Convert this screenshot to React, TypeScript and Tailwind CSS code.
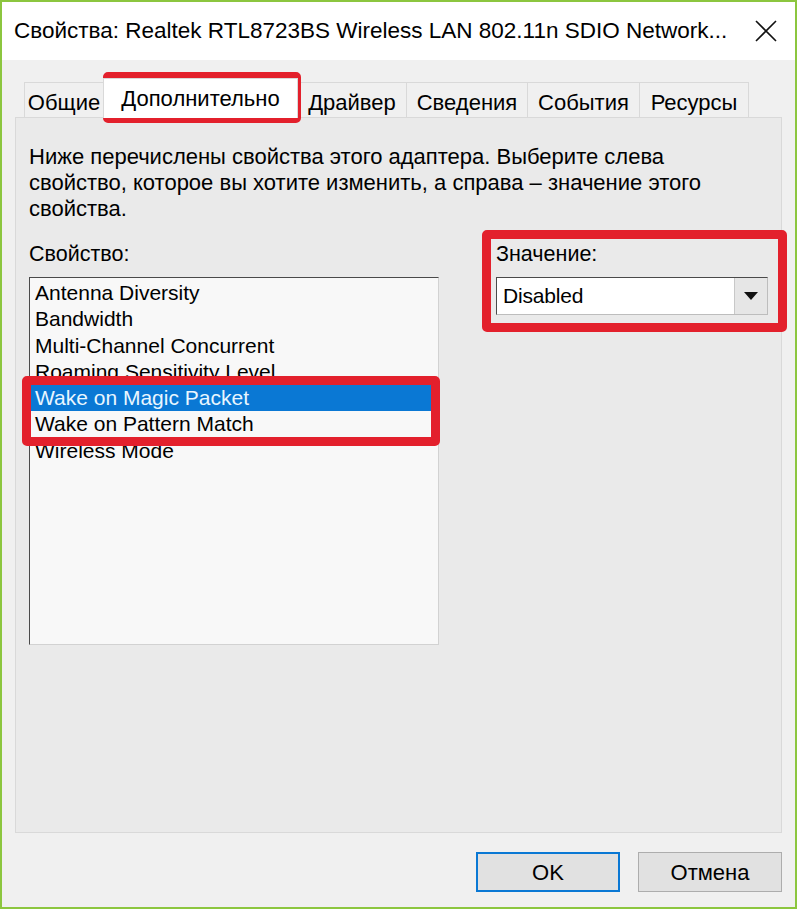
import React from 'react'

const tabs = [
  { label: 'Общие', w: 'w-[80px]' },
  { label: 'Дополнительно', w: 'w-[195px]' },
  { label: 'Драйвер', w: 'w-[110px]' },
  { label: 'Сведения', w: 'w-[122px]' },
  { label: 'События', w: 'w-[113px]' },
  { label: 'Ресурсы', w: 'w-[110px]' },
]

const props = [
  'Antenna Diversity',
  'Bandwidth',
  'Multi-Channel Concurrent',
  'Roaming Sensitivity Level',
  'Wake on Magic Packet',
  'Wake on Pattern Match',
  'Wireless Mode',
]

export default function App() {
  return (
    <div
      className="relative w-[800px] h-[910px] bg-white overflow-hidden text-black"
      style={{ fontFamily: '"Liberation Sans", Arial, sans-serif' }}
    >
      <div className="flex flex-col w-[797px] h-[909px] border-2 border-[#8cc63f] bg-[#f0f0f0]">
        {/* title bar */}
        <div className="flex items-center justify-between h-[58px] bg-white pl-[12px] pr-[16px]">
          <span className="text-[22.5px] whitespace-nowrap">
            Свойства: Realtek RTL8723BS Wireless LAN 802.11n SDIO Network...
          </span>
          <svg width="22" height="22" viewBox="0 0 22 22" className="mr-[2px]">
            <path d="M1 1 L21 21 M21 1 L1 21" stroke="#111" strokeWidth="1.6" fill="none" />
          </svg>
        </div>

        {/* body */}
        <div className="flex flex-col flex-1 pt-[22px] px-[13px]">
          <div className="flex items-end h-[35px] pl-[10px]">
            {tabs.map((t, i) =>
              i === 1 ? (
                <div
                  key={t.label}
                  className={`relative z-10 flex items-center justify-center h-[40px] -mb-px -ml-px bg-white border border-b-0 border-[#d9d9d9] text-[22px] ${t.w}`}
                >
                  {t.label}
                </div>
              ) : (
                <div
                  key={t.label}
                  className={`flex items-center justify-center h-[35px] bg-[#f0f0f0] border border-b-0 border-[#d9d9d9] -ml-px pt-[4px] text-[22px] ${t.w}`}
                >
                  {t.label}
                </div>
              ),
            )}
          </div>

          <div className="flex flex-col h-[716px] w-[767px] border border-[#d9d9d9] bg-[#eaeaea] pt-[26px] pl-[13px] pr-[12px]">
            <p className="text-[22px] leading-[26px] w-[700px]">
              Ниже перечислены свойства этого адаптера. Выберите слева свойство, которое вы хотите изменить, а справа – значение этого свойства.
            </p>

            <div className="flex mt-[19px]">
              <div className="flex flex-col w-[411px]">
                <div className="text-[21.5px] leading-[26px]">Свойство:</div>
                <div className="mt-[10px] h-[368px] w-[410px] bg-[#f8f8f8] border-t-[1.5px] border-l-[1.5px] border-r border-b border-t-[#4a4a4a] border-l-[#4a4a4a] border-r-[#d2d2d2] border-b-[#d2d2d2] pt-[2px]">
                  {props.map((p, i) => (
                    <div
                      key={p}
                      className={
                        'h-[26.3px] leading-[26px] pl-[5px] text-[21px] whitespace-nowrap ' +
                        (i === 4 ? 'bg-[#0a78d4] text-[#e8f6ff]' : '')
                      }
                    >
                      {p}
                    </div>
                  ))}
                </div>
              </div>

              <div className="flex flex-col ml-[56px] w-[272px]">
                <div className="text-[21.5px] leading-[26px]">Значение:</div>
                <div className="flex mt-[10px] h-[38px] bg-white border-t-[1.5px] border-l-[1.5px] border-r border-b border-t-[#4a4a4a] border-l-[#4a4a4a] border-r-[#bdbdbd] border-b-[#bdbdbd]">
                  <div className="flex-1 flex items-center pl-[6px] text-[21px] tracking-[-0.2px]">Disabled</div>
                  <div className="flex items-center justify-center w-[33px] bg-[#e6e6e6] border-l border-[#c8c8c8]">
                    <svg width="14" height="8" viewBox="0 0 14 8">
                      <path d="M0 0 H14 L7 8 Z" fill="#111" />
                    </svg>
                  </div>
                </div>
              </div>
            </div>
          </div>

          <div className="flex justify-end gap-[18px] mt-[19px]">
            <button className="w-[144px] h-[40px] bg-[#e1e1e1] border-2 border-[#0a78d4] text-[22px]">OK</button>
            <button className="w-[144px] h-[40px] bg-[#e1e1e1] border border-[#adadad] text-[22px]">Отмена</button>
          </div>
        </div>
      </div>

      {/* red annotation frames */}
      <div className="absolute left-[103px] top-[72px] w-[198px] h-[51px] border-[9px] border-[#e3202c] rounded-[5px]" />
      <div className="absolute left-[482px] top-[230px] w-[305px] h-[102px] border-[9px] border-[#e3202c] rounded-[5px]" />
      <div className="absolute left-[22px] top-[376px] w-[418px] h-[70px] border-[9px] border-[#e3202c] rounded-[5px]" />
    </div>
  )
}
